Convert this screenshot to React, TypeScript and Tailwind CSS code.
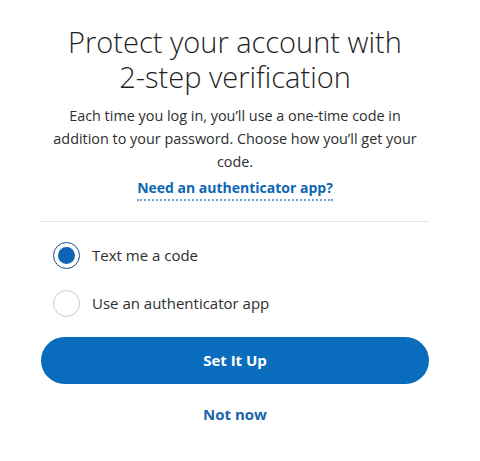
import { useState } from 'react';

function Radio({ checked, label, onClick }: { checked: boolean; label: string; onClick: () => void }) {
  return (
    <button onClick={onClick} className="flex items-center gap-[12px] h-[28px] text-left">
      <span
        className={`w-[27px] h-[27px] rounded-full flex items-center justify-center bg-white ${
          checked ? 'border-[1.5px] border-[#1b4e8a]' : 'border border-[#c9c9c9]'
        }`}
      >
        {checked && <span className="w-[17px] h-[17px] rounded-full bg-[#0b64b4]"></span>}
      </span>
      <span className="text-[15px] text-[#2c2e2f]">{label}</span>
    </button>
  );
}

export default function App() {
  const [method, setMethod] = useState<'sms' | 'app'>('sms');

  return (
    <div className="min-h-screen bg-white font-['Open_Sans',sans-serif] text-[#2c2e2f]">
      <div className="w-[388px] ml-[41px] pt-[24px] flex flex-col items-center">
        <h1 className="text-[29px] leading-[35px] font-light text-center text-[#1f1f1f]">
          Protect your account with
          <br />
          2-step verification
        </h1>

        <p className="mt-[10px] w-[372px] text-[14.4px] leading-[23px] text-center text-[#2c2e2f]">
          Each time you log in, you’ll use a one-time code in addition to your password. Choose how you’ll get your code.
        </p>

        <a className="mt-[4px] text-[14px] leading-[21px] font-bold text-[#0c67b4] border-b-2 border-dotted border-[#6fa6da] pb-[1px]">
          Need an authenticator app?
        </a>

        <div className="w-full mt-[20px] border-t border-dotted border-[#cfcfcf]"></div>

        <div className="w-full mt-[19px] pl-[12px] flex flex-col gap-[20px]">
          <Radio checked={method === 'sms'} label="Text me a code" onClick={() => setMethod('sms')} />
          <Radio checked={method === 'app'} label="Use an authenticator app" onClick={() => setMethod('app')} />
        </div>

        <button className="w-full mt-[20px] h-[47px] rounded-full bg-[#0a6cbd] text-white text-[15px] font-bold">
          Set It Up
        </button>

        <button className="mt-[19px] text-[15px] font-bold text-[#1a64ad]">Not now</button>
      </div>
    </div>
  );
}
